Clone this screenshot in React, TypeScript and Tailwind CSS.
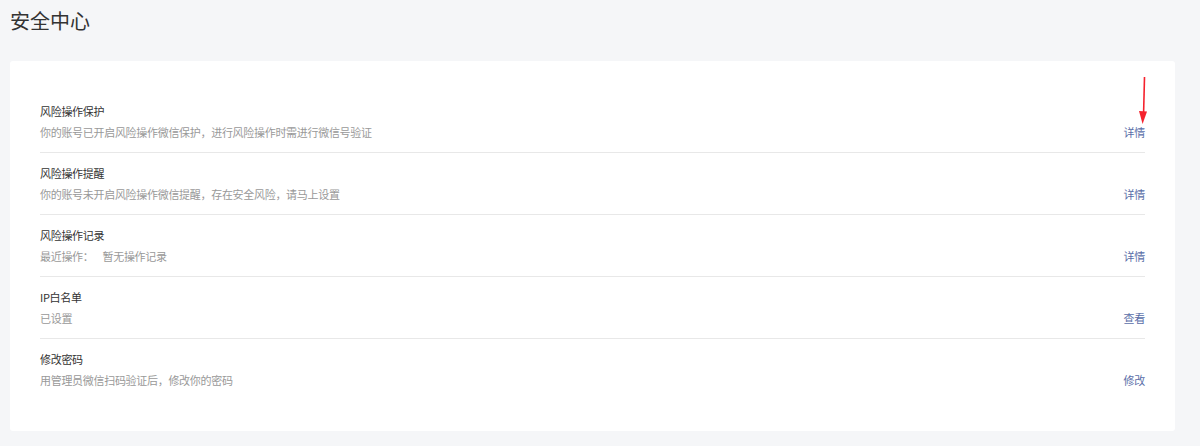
import React from 'react';

type Item = {
  title: string;
  desc: React.ReactNode;
  action: string;
};

const items: Item[] = [
  { title: '风险操作保护', desc: '你的账号已开启风险操作微信保护，进行风险操作时需进行微信号验证', action: '详情' },
  { title: '风险操作提醒', desc: '你的账号未开启风险操作微信提醒，存在安全风险，请马上设置', action: '详情' },
  {
    title: '风险操作记录',
    desc: (
      <>
        <span>最近操作：</span>
        <span className="ml-[9px]">暂无操作记录</span>
      </>
    ),
    action: '详情',
  },
  { title: 'IP白名单', desc: '已设置', action: '查看' },
  { title: '修改密码', desc: '用管理员微信扫码验证后，修改你的密码', action: '修改' },
];

const font = { fontFamily: '"Noto Sans CJK SC", "Liberation Sans", sans-serif' };

const App: React.FC = () => {
  return (
    <div className="min-h-[446px] w-[1200px] bg-[#f5f6f8] pl-[10px]" style={font}>
      <h1 className="pt-[8px] text-[20px] leading-[26px] font-normal text-[#333]">安全中心</h1>
      <div className="relative mt-[27px] w-[1165px] rounded-[3px] bg-white px-[30px] py-[30px]">
        {items.map((item, i) => (
          <div
            key={item.title}
            className={`flex items-end justify-between pt-[10px] ${i < items.length - 1 ? 'pb-[10px] border-b border-[#e8e8e8]' : 'pb-[11px]'}`}
          >
            <div className="text-[11px] tracking-[-0.3px]">
              <div className="leading-5 text-[#333]">{item.title}</div>
              <div className="mt-px leading-5 text-[#999]">{item.desc}</div>
            </div>
            <a className="text-[11px] tracking-[-0.3px] leading-5 text-[#5a6ea8] cursor-pointer">{item.action}</a>
          </div>
        ))}
        {/* red annotation arrow */}
        <svg className="absolute left-[1124px] top-[14px]" width="16" height="50" viewBox="0 0 16 50">
          <path d="M10.5 2 L9.6 38" stroke="#f5222d" strokeWidth="1.6" fill="none" />
          <path d="M5 36 L13 36.5 L8.6 49 Z" fill="#f5222d" />
        </svg>
      </div>
    </div>
  );
};

export default App;
